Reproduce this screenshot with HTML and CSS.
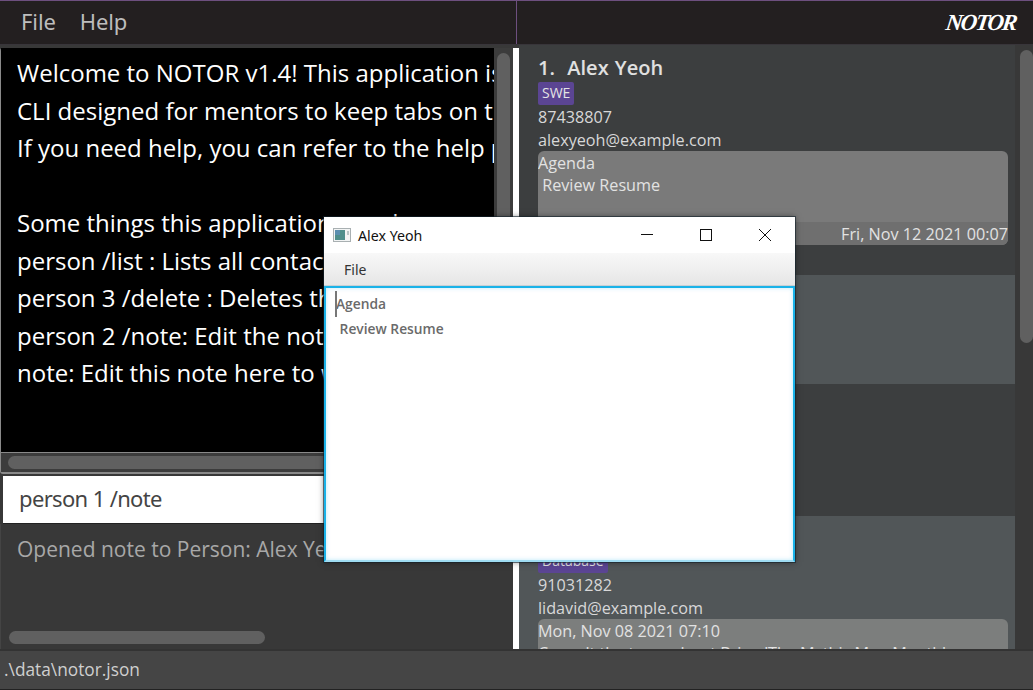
FILE: index.html
```html
<!DOCTYPE html>
<html lang="en">
<head>
    <meta charset="UTF-8">
    <title>NOTOR</title>
    <link rel="stylesheet" href="styles.css">
</head>
<body>
    <header class="topbar">
        <nav class="menu">
            <span>File</span>
            <span>Help</span>
        </nav>
        <div class="brand">
            <span class="logo">NOTOR</span>
        </div>
    </header>

    <main class="content">
        <section class="left">
            <div class="result">
                <div class="result-text">
                    <pre>Welcome to NOTOR v1.4! This application is a
CLI designed for mentors to keep tabs on their mentees.
If you need help, you can refer to the help page.

Some things this application can do:
person /list : Lists all contacts.
person 3 /delete : Deletes the 3rd contact.
person 2 /note: Edit the note of the 2nd contact.
note: Edit this note here to write your own.</pre>
                </div>
                <div class="vbar"><div class="thumb"></div></div>
                <div class="hbar"><div class="thumb"></div></div>
            </div>
            <div class="command">person 1 /note</div>
            <div class="feedback">
                <p>Opened note to Person: Alex Yeoh</p>
                <div class="feedback-bar"><div class="thumb"></div></div>
            </div>
        </section>

        <div class="divider"></div>

        <section class="right">
            <div class="list">
                <article class="card">
                    <h2>1.&nbsp; Alex Yeoh</h2>
                    <span class="tag">SWE</span>
                    <div class="line">87438807</div>
                    <div class="line">alexyeoh@example.com</div>
                    <div class="note">
                        <div class="note-body">Agenda<br>&nbsp;Review Resume</div>
                        <div class="note-date">Fri, Nov 12 2021 00:07</div>
                    </div>
                </article>
                <article class="card even short"></article>
                <article class="card tall"></article>
                <article class="card even">
                    <h2>4.&nbsp; David Li</h2>
                    <span class="tag">Database</span>
                    <div class="line">91031282</div>
                    <div class="line">lidavid@example.com</div>
                    <div class="note">
                        <div class="note-body">Mon, Nov 08 2021 07:10<br>Consult the team about Brian 'The Mythic Man Month'</div>
                    </div>
                </article>
            </div>
            <div class="list-bar"><div class="thumb"></div></div>
        </section>
    </main>

    <footer class="status">.\data\notor.json</footer>

    <div class="window">
        <div class="titlebar">
            <svg class="app-icon" width="18" height="14" viewBox="0 0 18 14">
                <rect x="0.5" y="0.5" width="17" height="13" fill="#f2f4f4" stroke="#a9b0b2"/>
                <rect x="2" y="2" width="10" height="10" fill="#4f8f8c"/>
                <rect x="2" y="2" width="5" height="5" fill="#5c8fb0"/>
                <rect x="14" y="3" width="2" height="4" fill="#b9c6c6"/>
            </svg>
            <span class="title">Alex Yeoh</span>
            <svg class="win-btn" width="14" height="14" viewBox="0 0 14 14">
                <path d="M1 6.5H13" stroke="#111" fill="none"/>
            </svg>
            <svg class="win-btn" width="14" height="14" viewBox="0 0 14 14">
                <rect x="1.5" y="1.5" width="11" height="11" stroke="#111" fill="none"/>
            </svg>
            <svg class="win-btn" width="14" height="14" viewBox="0 0 14 14">
                <path d="M1 1L13 13M13 1L1 13" stroke="#111" fill="none"/>
            </svg>
        </div>
        <div class="win-menu">File</div>
        <div class="editor">
            <div class="editor-text"><span class="caret"></span>Agenda<br>&nbsp;Review Resume</div>
        </div>
    </div>
</body>
</html>
```

FILE: styles.css
```css
html, body {
    margin: 0;
    padding: 0;
}
body {
    width: 1033px;
    height: 690px;
    overflow: hidden;
    display: flex;
    flex-direction: column;
    position: relative;
    font-family: "Open Sans", sans-serif;
    background-color: #383838;
}

/* top bar */
.topbar {
    height: 45px;
    flex: none;
    display: flex;
    box-sizing: border-box;
    background-color: #231f20;
    border-top: 1px solid #6d4f7f;
    border-bottom: 1px solid #38353a;
}
.menu {
    width: 517px;
    box-sizing: border-box;
    border-right: 1px solid #6d4f7f;
    padding: 5px 0 0 21px;
    display: flex;
    gap: 24px;
    font-family: "Noto Sans", sans-serif;
    font-size: 22px;
    letter-spacing: -0.1px;
    line-height: 30px;
    color: #bdbdbd;
}
.brand {
    flex: 1;
    display: flex;
    justify-content: flex-end;
    align-items: center;
    padding-right: 17px;
}
.logo {
    font-family: "Liberation Serif", serif;
    font-weight: bold;
    font-style: italic;
    font-size: 23px;
    letter-spacing: -1.8px;
    color: #fff;
    transform: skewX(-8deg);
}

/* main split */
.content {
    height: 604px;
    flex: none;
    display: flex;
}
.left {
    width: 513px;
    flex: none;
    display: flex;
    flex-direction: column;
    background-color: #383838;
}
.divider {
    width: 6px;
    flex: none;
    margin-top: 3px;
    background-color: #fff;
}
.right {
    flex: 1;
    display: flex;
    background-color: #3c3e3f;
    min-width: 0;
}
.thumb {
    background-color: #606060;
    border-radius: 8px;
}

/* result box */
.result {
    height: 426px;
    margin-top: 3px;
    flex: none;
    display: grid;
    grid-template-columns: 493px 19px;
    grid-template-rows: 405px 19px;
    box-sizing: border-box;
    border-left: 1px solid #8a8a8a;
    border-bottom: 2px solid #8a8a8a;
    border-radius: 3px 0 0 3px;
}
.result-text {
    background-color: #000;
    overflow: hidden;
    border-bottom: 1px solid #8a8a8a;
    box-sizing: border-box;
    padding: 6px 0 0 16px;
}
.result-text pre {
    margin: 0;
    font-family: "Open Sans", sans-serif;
    font-size: 24px;
    line-height: 37.5px;
    color: #fff;
}
.vbar {
    background-color: #3c3c3c;
    padding: 5px 3px 0 3px;
}
.vbar .thumb {
    height: 400px;
}
.hbar {
    grid-column: 1 / 3;
    background-color: #3c3c3c;
    padding: 3px 3px 2px 7px;
}
.hbar .thumb {
    height: 13px;
}

/* command box */
.command {
    height: 48px;
    flex: none;
    margin: 2px 0 0 3px;
    background-color: #fff;
    box-sizing: border-box;
    padding-left: 16px;
    font-family: "Noto Sans", sans-serif;
    font-size: 22px;
    letter-spacing: -0.65px;
    line-height: 45px;
    color: #444;
    border-bottom: 1px solid #222;
}

/* feedback */
.feedback {
    flex: 1;
    box-sizing: border-box;
    display: flex;
    flex-direction: column;
    justify-content: space-between;
    border-left: 1px solid #444;
    padding: 8px 0 5px 16px;
}
.feedback p {
    margin: 0;
    font-size: 21px;
    line-height: 35px;
    color: #a8a8a8;
    white-space: nowrap;
}
.feedback-bar {
    margin-left: -8px;
}
.feedback-bar .thumb {
    width: 256px;
    height: 13px;
}

/* person list */
.list {
    width: 496px;
    flex: none;
    padding-top: 3px;
    overflow: hidden;
    color: #d8d8d8;
}
.card {
    height: 227px;
    box-sizing: border-box;
    padding: 6px 7px 0 19px;
    background-color: #3c3e3f;
}
.card.even {
    background-color: #515658;
}
.card.short {
    height: 109px;
}
.card.tall {
    height: 132px;
}
.card h2 {
    margin: 0;
    font-size: 20px;
    font-weight: 600;
    word-spacing: 1px;
    line-height: 28px;
    color: #e0e0e0;
}
.tag {
    display: inline-block;
    height: 23px;
    padding: 0 4px;
    border-radius: 2px;
    background-color: #5b4593;
    font-size: 14px;
    line-height: 22px;
    color: #e4e4e4;
    vertical-align: top;
}
.line {
    height: 23px;
    font-size: 16.2px;
    line-height: 25px;
}
.note {
    height: 94px;
    overflow: hidden;
    background-color: #7a7a7a;
    border-radius: 6px;
    font-size: 16.2px;
    line-height: 22px;
    color: #e2e2e2;
}
.card.even .note {
    background-color: #7c7e7d;
}
.note-body {
    height: 71px;
    box-sizing: border-box;
    padding-top: 1px;
}
.note-date {
    height: 23px;
    background-color: #6f6f6f;
    text-align: right;
    white-space: nowrap;
    line-height: 25px;
}
.list-bar {
    flex: 1;
    padding: 5px 3px 0 3px;
    background-color: #383838;
}
.list-bar .thumb {
    height: 293px;
    width: 13px;
    margin-left: 2px;
}

/* status bar */
.status {
    flex: 1;
    background-color: #454545;
    border-top: 2px solid #333;
    border-bottom: 1px solid #222;
    font-size: 17.3px;
    line-height: 38px;
    padding-left: 4px;
    color: #cfcfcf;
}

/* floating note window */
.window {
    position: absolute;
    left: 324px;
    top: 217px;
    width: 471px;
    height: 345px;
    display: flex;
    flex-direction: column;
    background-color: #fff;
    box-shadow: 0 0 0 1px rgba(20, 35, 45, 0.6), 0 0 6px rgba(0, 0, 0, 0.5);
}
.titlebar {
    height: 36px;
    flex: none;
    display: flex;
    align-items: center;
    padding-left: 9px;
}
.app-icon {
    margin-right: 7px;
}
.title {
    flex: 1;
    font-family: "Noto Sans", sans-serif;
    font-size: 14.2px;
    color: #111;
}
.win-btn {
    width: 14px;
    margin-right: 45px;
}
.win-btn:last-child {
    margin-right: 23px;
}
.win-menu {
    height: 33px;
    flex: none;
    box-sizing: border-box;
    padding-left: 20px;
    background: linear-gradient(#f8f8f8, #e6e6e6);
    border-bottom: 1px solid #c8d0d4;
    font-family: "Noto Sans", sans-serif;
    font-size: 14px;
    line-height: 33px;
    color: #333;
}
.editor {
    flex: 1;
    border: 2px solid #1ab2e8;
    border-bottom-color: #9fdcf2;
    box-sizing: border-box;
    padding: 3px 0 0 10px;
    box-shadow: inset 0 0 4px rgba(26, 178, 232, 0.3);
}
.editor-text {
    position: relative;
    font-size: 13.8px;
    font-weight: 600;
    line-height: 25px;
    color: #6a6a6a;
}
.caret {
    position: absolute;
    left: -1px;
    top: 0;
    width: 2px;
    height: 26px;
    background-color: #777;
}
```
